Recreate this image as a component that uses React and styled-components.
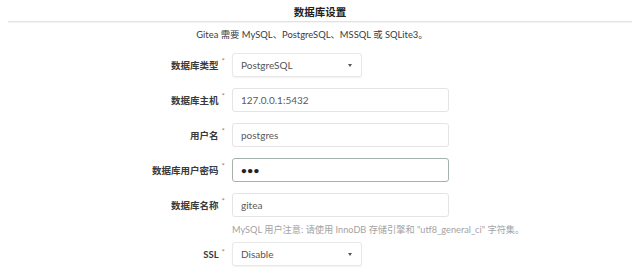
import React from 'react';
import styled, { createGlobalStyle } from 'styled-components';

const fields = [
  { label: '数据库类型', type: 'select', value: 'PostgreSQL' },
  { label: '数据库主机', value: '127.0.0.1:5432' },
  { label: '用户名', value: 'postgres' },
  { label: '数据库用户密码', value: '•••', focused: true },
  {
    label: '数据库名称',
    value: 'gitea',
    help: 'MySQL 用户注意: 请使用 InnoDB 存储引擎和 "utf8_general_ci" 字符集。',
  },
  { label: 'SSL', type: 'select', value: 'Disable' },
];

function App() {
  return (
    <Page>
      <GlobalStyle />
      <Header>数据库设置</Header>
      <Intro>Gitea 需要 MySQL、PostgreSQL、MSSQL 或 SQLite3。</Intro>
      <Form>
        {fields.map((f) => (
          <Field key={f.label}>
            <Row>
              <Label>
                {f.label}
                <Star>*</Star>
              </Label>
              {f.type === 'select' ? (
                <Select>
                  {f.value}
                  <Caret />
                </Select>
              ) : (
                <Input $focused={f.focused}>{f.value}</Input>
              )}
            </Row>
            {f.help && <Help>{f.help}</Help>}
          </Field>
        ))}
      </Form>
    </Page>
  );
}

export default App;

/* Styles */

const GlobalStyle = createGlobalStyle`
  body {
    margin: 0;
    background: #fff;
    font-family: Lato, "Noto Sans CJK SC", sans-serif;
    color: #333;
  }
`;

const Page = styled.div`
  width: 640px;
  height: 279px;
  overflow: hidden;
  background: #fff;
`;

const Header = styled.div`
  margin: 0 8px;
  padding-top: 4px;
  height: 17px;
  line-height: 17px;
  text-align: center;
  font-size: 10.5px;
  font-weight: 700;
  color: #222;
  border-bottom: 1px solid #e2e2e2;
  box-shadow: 0 1px 1px rgba(0, 0, 0, 0.04);
`;

const Intro = styled.div`
  margin-top: 5px;
  margin-right: 16px;
  line-height: 16px;
  text-align: center;
  font-size: 9.4px;
  color: #3a3a3a;
`;

const Form = styled.div`
  margin-top: 10px;
  display: flex;
  flex-direction: column;
  gap: 11px;
`;

const Field = styled.div`
  display: flex;
  flex-direction: column;
`;

const Row = styled.div`
  display: flex;
  align-items: center;
  height: 24px;
`;

const Label = styled.div`
  width: 225px;
  margin-right: 7px;
  text-align: right;
  font-size: 9.5px;
  font-weight: 700;
  color: #3a3a3a;
`;

const Star = styled.span`
  display: inline-block;
  vertical-align: top;
  margin-left: 3px;
  margin-top: -2px;
  font-size: 8px;
  font-weight: 400;
  color: #888;
`;

const boxBase = `
  box-sizing: border-box;
  height: 24px;
  display: flex;
  align-items: center;
  padding: 0 8px;
  font-size: 10px;
  background: #fff;
  border-radius: 3px;
`;

const Input = styled.div`
  ${boxBase}
  width: 217px;
  border: 1px solid ${(p) => (p.$focused ? '#a4b3aa' : '#e4e4e4')};
  color: ${(p) => (p.$focused ? '#222' : '#5a5a5a')};
  font-weight: ${(p) => (p.$focused ? 700 : 400)};
  letter-spacing: ${(p) => (p.$focused ? '0.5px' : '0')};
`;

const Select = styled.div`
  ${boxBase}
  width: 130px;
  position: relative;
  border: 1px solid #e8e8e8;
  box-shadow: 0 1px 2px rgba(0, 0, 0, 0.06);
  color: #555;
`;

const Caret = styled.span`
  position: absolute;
  right: 9px;
  top: 10px;
  width: 0;
  height: 0;
  border-left: 2.5px solid transparent;
  border-right: 2.5px solid transparent;
  border-top: 3px solid #555;
`;

const Help = styled.div`
  margin-top: 6px;
  margin-bottom: -6px;
  margin-left: 232px;
  line-height: 14px;
  font-size: 9.2px;
  color: #a3a3a3;
  white-space: nowrap;
`;
